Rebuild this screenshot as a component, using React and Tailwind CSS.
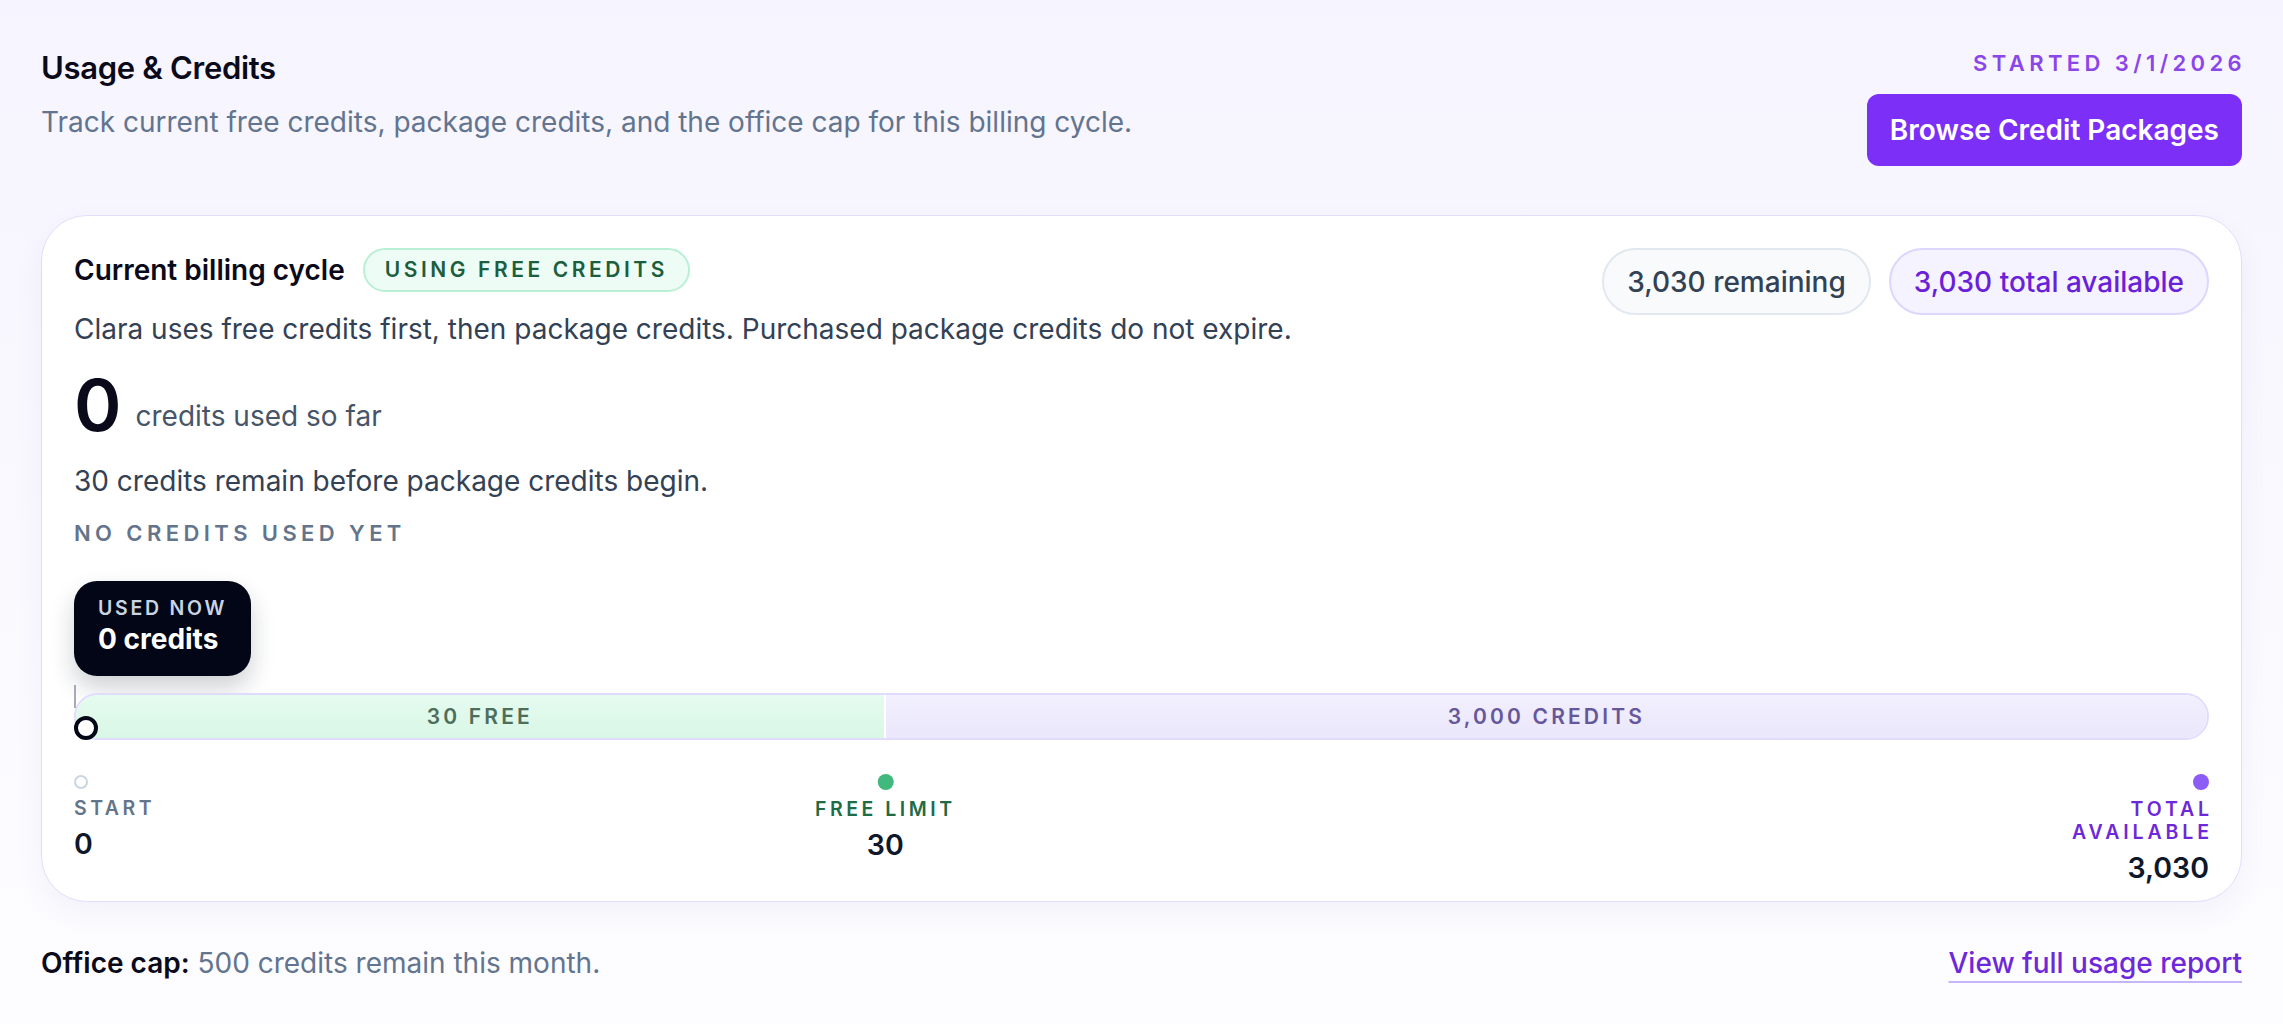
import React from 'react'

const label = 'text-[19.5px] font-semibold uppercase leading-[24px] tracking-[0.18em]'

function Marker({ dot, title, titleClass, value, align }) {
  return (
    <div className={`flex flex-col ${align}`}>
      {dot}
      <span className={`mt-[7px] ${label} ${titleClass}`}>{title}</span>
      <span className="mt-[8px] text-[28.5px] font-semibold leading-[32px] text-[#0f172a]">{value}</span>
    </div>
  )
}

export default function App() {
  return (
    <div className="min-h-screen bg-gradient-to-b from-[#f6f4fe] to-[#fdfdff] px-[41px] pt-[50px] font-['Inter',sans-serif]">
      {/* Header */}
      <header className="flex items-start justify-between">
        <div>
          <h1 className="text-[31px] font-semibold leading-[36px] tracking-[-0.01em] text-[#0a0a1a]">Usage &amp; Credits</h1>
          <p className="mt-[17px] text-[28px] leading-[38px] text-slate-500">
            Track current free credits, package credits, and the office cap for this billing cycle.
          </p>
        </div>
        <div className="flex flex-col items-end">
          <span className="-mr-[4px] text-[22px] font-semibold uppercase leading-[26px] tracking-[0.2em] text-[#8b46ea]">
            Started 3/1/2026
          </span>
          <button className="mt-[18px] h-[72px] rounded-[12px] bg-[#7b2ff7] px-[23px] text-[28px] font-semibold text-white">
            Browse Credit Packages
          </button>
        </div>
      </header>

      {/* Billing cycle card */}
      <section className="mt-[49px] rounded-[46px] border border-[#e3ddfb] bg-white px-[32px] pb-[17px] pt-[32px] shadow-[0_10px_30px_rgba(76,29,149,0.05)]">
        <div className="flex items-start justify-between">
          <div>
            <div className="flex items-center gap-[18px]">
              <h2 className="text-[28px] font-semibold leading-[44px] text-[#0a0a1a]">Current billing cycle</h2>
              <span className="flex h-[44px] items-center rounded-full border-2 border-[#b9f0d5] bg-[#edfdf5] px-[20px] text-[21px] font-semibold uppercase tracking-[0.17em] text-[#1c5e3d]">
                Using free credits
              </span>
            </div>
            <p className="mt-[18px] text-[28px] leading-[38px] text-[#334155]">
              Clara uses free credits first, then package credits. Purchased package credits do not expire.
            </p>
            <div className="mt-[21px] flex items-end gap-[14px]">
              <span className="text-[72px] font-semibold leading-none text-[#0a0a1a]">0</span>
              <span className="text-[28px] leading-[50px] text-[#475569]">credits used so far</span>
            </div>
            <p className="mt-[21px] text-[28px] leading-[38px] text-[#334155]">30 credits remain before package credits begin.</p>
            <p className="mt-[18px] text-[22px] font-semibold uppercase leading-[30px] tracking-[0.2em] text-[#64748b]">No credits used yet</p>
          </div>
          <div className="flex gap-[18px]">
            <span className="flex h-[67px] items-center rounded-full border-2 border-[#e2e8f0] bg-[#f8fafc] px-[23px] text-[28px] font-medium text-[#334155]">
              3,030 remaining
            </span>
            <span className="flex h-[67px] items-center rounded-full border-2 border-[#ddd6fe] bg-[#f5f3ff] px-[23px] text-[28px] font-medium text-[#6a1fd8]">
              3,030 total available
            </span>
          </div>
        </div>

        {/* Used now tooltip */}
        <div className="mt-[33px] inline-flex flex-col rounded-[23px] bg-[#030617] px-[24px] pb-[18px] pt-[15px] shadow-[0_12px_24px_rgba(15,23,42,0.2)]">
          <span className="text-[19.5px] font-semibold uppercase leading-[24px] tracking-[0.14em] text-[#cbd5e1]">Used now</span>
          <span className="text-[28px] font-bold leading-[38px] text-white">0 credits</span>
        </div>

        {/* Progress bar */}
        <div className="relative mt-[17px]">
          <span className="absolute -top-[8px] left-0 z-10 h-[23px] w-[2px] bg-[#a8a8b8]" />
          <div className="flex h-[47px] overflow-hidden rounded-full border-2 border-[#e2dcfc]">
            <div className="flex w-[38%] items-center justify-center border-r-2 border-white bg-gradient-to-b from-[#e5fbef] to-[#d9f7e6] text-[21px] font-semibold uppercase tracking-[0.15em] text-[#4d6e5a]">
              30 free
            </div>
            <div className="flex flex-1 items-center justify-center bg-gradient-to-b from-[#f2effe] to-[#ebe7fc] text-[21px] font-semibold uppercase tracking-[0.15em] text-[#66579b]">
              3,000 credits
            </div>
          </div>
          <span className="absolute bottom-0 left-0 z-10 h-[24px] w-[24px] rounded-full border-[4px] border-[#030617] bg-white" />
        </div>

        {/* Markers */}
        <div className="relative mt-[34px] flex items-start justify-between">
          <Marker
            align="items-start"
            dot={<span className="mt-px h-[14px] w-[14px] rounded-full border-2 border-[#cbd5e1] bg-white" />}
            title="Start"
            titleClass="text-[#64748b]"
            value="0"
          />
          <div className="absolute left-[38%] top-0 -translate-x-1/2">
            <Marker
              align="items-center"
              dot={<span className="h-[16px] w-[16px] rounded-full bg-[#42b97c]" />}
              title="Free limit"
              titleClass="text-[#1f6b45]"
              value="30"
            />
          </div>
          <div className="flex flex-col items-end">
            <span className="h-[16px] w-[16px] rounded-full bg-[#8b5cf6]" />
            <span className="-mr-[4px] mt-[8px] max-w-[160px] text-right text-[19.5px] font-semibold uppercase leading-[22.5px] tracking-[0.2em] text-[#6d28d9]">
              Total available
            </span>
            <span className="mt-[9px] text-[28.5px] font-semibold leading-[32px] text-[#0f172a]">3,030</span>
          </div>
        </div>
      </section>

      {/* Footer */}
      <footer className="mt-[42px] flex items-center justify-between text-[28px] leading-[38px]">
        <p className="text-slate-500">
          <span className="font-semibold text-[#0a0a1a]">Office cap:</span> 500 credits remain this month.
        </p>
        <a href="#" className="font-medium text-[#6d28d9] underline decoration-[#c4b5fd] decoration-2 underline-offset-[8px]">
          View full usage report
        </a>
      </footer>
    </div>
  )
}
